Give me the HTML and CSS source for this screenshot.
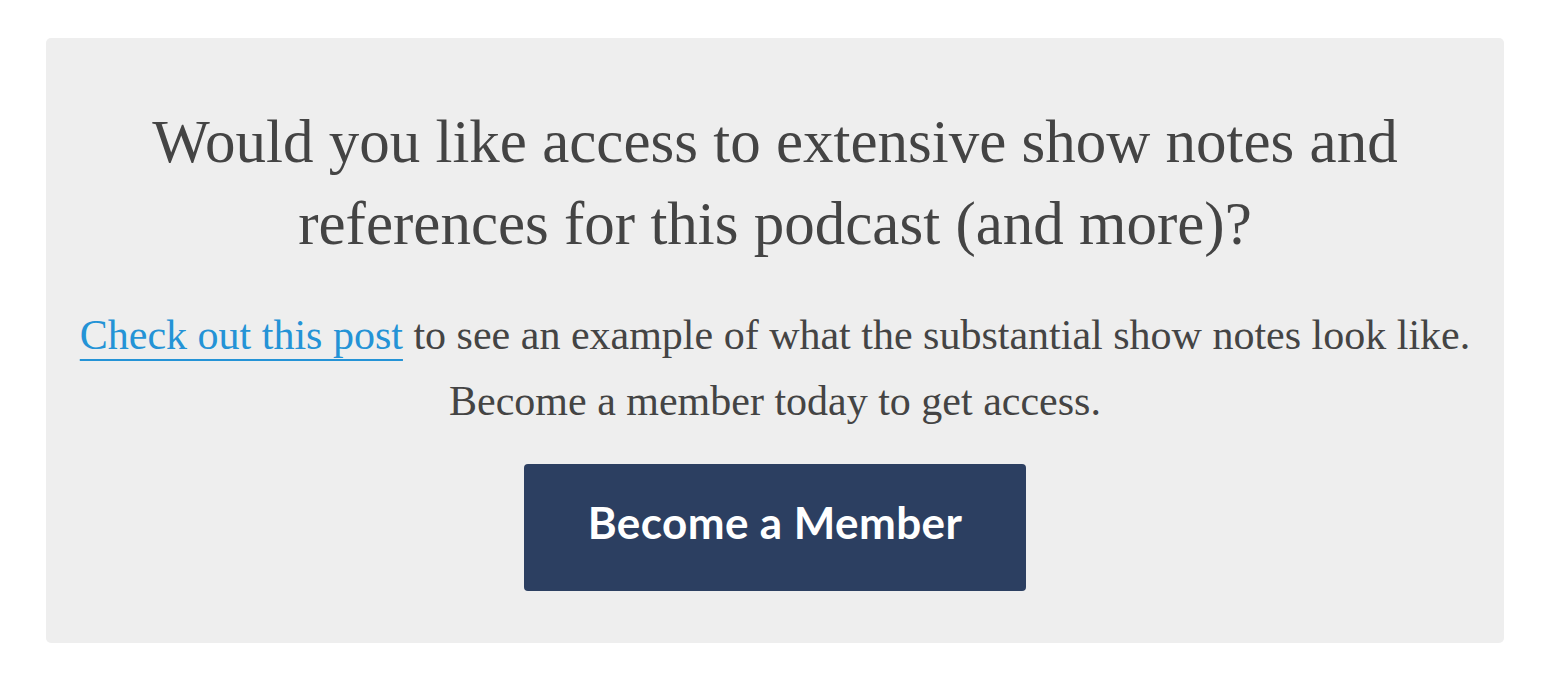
FILE: index.html
```html
<!DOCTYPE html>
<html lang="en">
<head>
<meta charset="utf-8">
<link rel="stylesheet" href="styles.css">
</head>
<body>
<div class="page">
  <section class="cta">
    <h2 class="cta-title">Would you like access to extensive show notes and<br>references for this podcast (and more)?</h2>
    <div class="cta-body">
      <p class="cta-text"><a class="cta-link" href="#">Check out this post</a> to see an example of what the substantial show notes look like.</p>
      <p class="cta-text">Become a member today to get access.</p>
    </div>
    <a class="cta-button" href="#">Become a Member</a>
  </section>
</div>
</body>
</html>
```
FILE: styles.css
```css
html, body {
  margin: 0;
  padding: 0;
  background: #ffffff;
}
.page {
  padding: 38px 44px 0 46px;
}
.cta {
  background: #eeeeee;
  border-radius: 5px;
  height: 605px;
  box-sizing: border-box;
  padding-top: 63px;
  display: flex;
  flex-direction: column;
  align-items: center;
  text-align: center;
  color: #444444;
  font-family: "Liberation Serif", "Times New Roman", serif;
}
.cta-title {
  margin: 0;
  font-weight: normal;
  font-size: 61px;
  line-height: 82px;
  white-space: nowrap;
}
.cta-body {
  margin-top: 37px;
}
.cta-text {
  margin: 0;
  font-size: 42px;
  line-height: 66px;
  white-space: nowrap;
}
.cta-link {
  color: #2493d6;
  text-decoration: underline;
  text-decoration-thickness: 2px;
  text-underline-offset: 10px;
  text-decoration-skip-ink: none;
}
.cta-button {
  margin-top: 30px;
  display: flex;
  align-items: center;
  justify-content: center;
  width: 502px;
  height: 127px;
  box-sizing: border-box;
  padding-bottom: 12px;
  background: #2c3f61;
  color: #ffffff;
  border-radius: 4px;
  text-decoration: none;
  font-family: Lato, "Open Sans", sans-serif;
  font-weight: bold;
  font-size: 44px;
  letter-spacing: 0.4px;
}
```
